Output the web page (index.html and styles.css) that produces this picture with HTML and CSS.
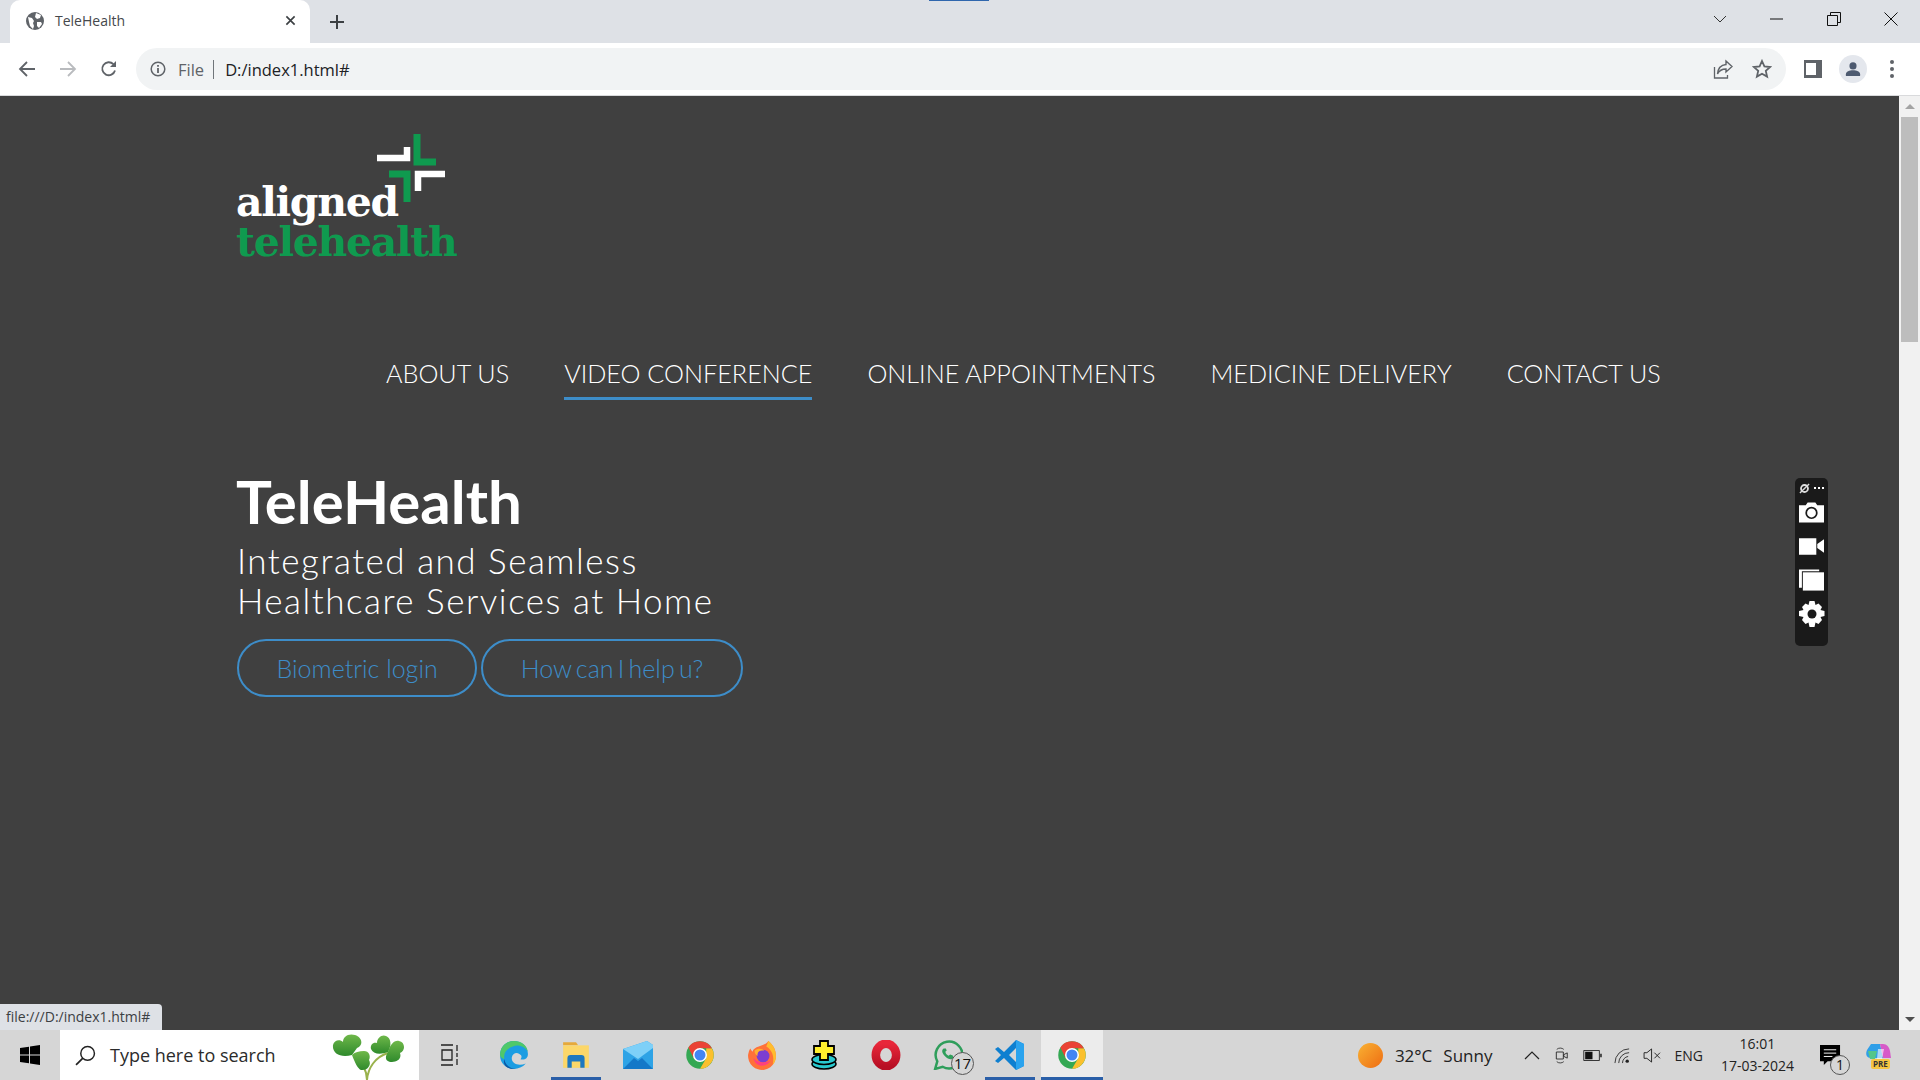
FILE: index.html
```html
<!DOCTYPE html>
<html>

<head>
    <title>TeleHealth</title>
    <link rel="stylesheet" href="styles.css">
</head>

<body>
    <svg class="defs" width="0" height="0">
        <defs>
            <linearGradient id="leaf" x1="0" y1="0" x2="0" y2="1">
                <stop offset="0" stop-color="#6fb84a" />
                <stop offset="1" stop-color="#2f8a2c" />
            </linearGradient>
            <linearGradient id="opera" x1="0" y1="0" x2="0" y2="1">
                <stop offset="0" stop-color="#e8273a" />
                <stop offset="1" stop-color="#b80f24" />
            </linearGradient>
        </defs>
        <symbol id="chrome" viewBox="0 0 24 24">
            <circle cx="12" cy="12" r="11" fill="#34a853" />
            <path d="M21.500 6.500A11 11 0 0 1 12 23l5-8.500V6.500z" fill="#fbc02d" />
            <path d="M12 1a11 11 0 0 1 9.500 5.500H12L7 14.500 2.700 6A11 11 0 0 1 12 1z" fill="#ea4335" />
            <circle cx="12" cy="12" r="5.600" fill="#fff" />
            <circle cx="12" cy="12" r="4.400" fill="#4285f4" />
        </symbol>
    </svg>

    <div class="tabbar">
        <span class="capture-line"></span>
        <div class="tab">
            <svg class="tab-favicon" viewBox="0 0 18 18">
                <circle cx="9" cy="9" r="9" fill="#5f6368" />
                <path d="M2 5l4 1 2 3-1 2 1 3-1 3-3-3-1-4zM10 1l5 2-1 3-3 1-2-2zM11 10h4l1 2-3 4-2-2z" fill="#fff" />
            </svg>
            <span class="tab-title">TeleHealth</span>
            <svg class="tab-close" viewBox="0 0 12 12">
                <path d="M1.500 1.500l9 9M10.500 1.500l-9 9" stroke="#3c4043" stroke-width="1.800" />
            </svg>
        </div>
        <svg class="new-tab" viewBox="0 0 16 16">
            <path d="M8 1v14M1 8h14" stroke="#3c4043" stroke-width="2" />
        </svg>
        <div class="window-buttons">
            <svg class="win-btn win-chevron" viewBox="0 0 14 8">
                <path d="M1 1l6 6 6-6" fill="none" stroke="#333" />
            </svg>
            <svg class="win-btn" viewBox="0 0 14 14">
                <path d="M0 7h13" stroke="#111" />
            </svg>
            <svg class="win-btn" viewBox="0 0 14 14">
                <path d="M.5 3.500h10v10H.5zM3.500 3.500v-3h10v10h-3" fill="none" stroke="#111" />
            </svg>
            <svg class="win-btn" viewBox="0 0 14 14">
                <path d="M.5.5l13 13M13.500.5l-13 13" stroke="#111" />
            </svg>
        </div>
    </div>

    <div class="toolbar">
        <svg class="nav-icon" viewBox="0 0 18 18">
            <path d="M17 9H2M9 2L2 9l7 7" fill="none" stroke="#5f6368" stroke-width="1.800" />
        </svg>
        <svg class="nav-icon" viewBox="0 0 18 18">
            <path d="M1 9h15M9 2l7 7-7 7" fill="none" stroke="#b9bbbe" stroke-width="1.800" />
        </svg>
        <svg class="nav-icon" viewBox="0 0 18 18">
            <path d="M15 10.500A6.500 6.500 0 1 1 13.400 4.200" fill="none" stroke="#5f6368" stroke-width="1.800" />
            <path d="M16 1v6h-6z" fill="#5f6368" />
        </svg>
        <div class="omnibox">
            <svg class="info-icon" viewBox="0 0 16 16">
                <circle cx="8" cy="8" r="6.800" fill="none" stroke="#5f6368" stroke-width="1.500" />
                <path d="M8 7v5M8 4v1.800" stroke="#5f6368" stroke-width="1.800" />
            </svg>
            <span class="omni-scheme">File</span>
            <span class="omni-sep"></span>
            <span class="omni-url">D:/index1.html#</span>
            <svg class="omni-share" viewBox="0 0 20 20">
                <path d="M1.500 8v11h13v-3" fill="none" stroke="#5f6368" stroke-width="1.300" />
                <path d="M13 2l6 5.500-6 5.500V10C9 10 6.500 11 4.500 15c.5-6 3.500-9 8.500-9.500z" fill="none" stroke="#5f6368" stroke-width="1.400" />
            </svg>
            <svg class="omni-star" viewBox="0 0 20 20">
                <path d="M10 2l2.400 5.400 5.800.6-4.400 3.900 1.300 5.700L10 14.700l-5.100 2.900 1.300-5.700L1.800 8l5.800-.6z" fill="none" stroke="#5f6368" stroke-width="1.800" />
            </svg>
        </div>
        <div class="toolbar-right">
            <div class="side-panel"><span></span></div>
            <div class="avatar">
                <svg viewBox="0 0 18 18">
                    <circle cx="9" cy="5.500" r="4" fill="#4d5a70" />
                    <path d="M1 17v-2c0-3 4-4.500 8-4.500s8 1.500 8 4.500v2z" fill="#4d5a70" />
                </svg>
            </div>
            <div class="dots"><i></i><i></i><i></i></div>
        </div>
    </div>

    <div class="viewport">
        <main class="page">
            <a class="logo" href="#">
                <svg class="logo-mark" viewBox="0 0 70 70">
                    <path d="M0 24h30V13" fill="none" stroke="#fff" stroke-width="6.500" />
                    <path d="M40 0v28h19" fill="none" stroke="#0f9a4f" stroke-width="7" />
                    <path d="M12 40h18v28" fill="none" stroke="#0f9a4f" stroke-width="7" />
                    <path d="M68 40H41v17" fill="none" stroke="#fff" stroke-width="6.500" />
                </svg>
                <span class="logo-top">aligned</span>
                <span class="logo-bottom">telehealth</span>
            </a>

            <nav class="menu">
                <a href="#">ABOUT US</a>
                <a href="#" class="active">VIDEO CONFERENCE</a>
                <a href="#">ONLINE APPOINTMENTS</a>
                <a href="#">MEDICINE DELIVERY</a>
                <a href="#">CONTACT US</a>
            </nav>

            <section class="hero">
                <h1>TeleHealth</h1>
                <p>Integrated and Seamless<br>Healthcare Services at Home</p>
                <div class="hero-buttons">
                    <a href="#" class="pill">Biometric login</a>
                    <a href="#" class="pill pill-help">How can I help u?</a>
                </div>
            </section>
        </main>

        <div class="scrollbar">
            <span class="arrow-up"></span>
            <span class="thumb"></span>
            <span class="arrow-down"></span>
        </div>

        <div class="capture-bar">
            <div class="capture-head">
                <svg viewBox="0 0 12 12" width="11" height="11">
                    <circle cx="6" cy="6" r="3.800" fill="none" stroke="#ddd" stroke-width="2" />
                    <path d="M1 11L11 1" stroke="#ddd" stroke-width="1.500" />
                </svg>
                <span class="capture-dots"><i></i><i></i><i></i></span>
            </div>
            <svg class="capture-icon" viewBox="0 0 26 22">
                <path d="M0 4h7l2-3h8l2 3h7v18H0z" fill="#fff" />
                <circle cx="13" cy="12" r="5.500" fill="none" stroke="#1a1a1a" stroke-width="1.800" />
            </svg>
            <svg class="capture-icon" viewBox="0 0 26 22">
                <path d="M0 3h18v17H0zM19 9l7-5v14l-7-5z" fill="#fff" />
            </svg>
            <svg class="capture-icon" viewBox="0 0 26 22">
                <path d="M0 0h21v2H3v17H0z" fill="#fff" />
                <path d="M4 3h22v19H4z" fill="#fff" />
            </svg>
            <svg class="capture-icon" viewBox="0 0 26 26">
                <path d="M10.500 0h5l1 4 3-1.500 3.500 3.500-1.500 3 4 1v5l-4 1 1.500 3L19.500 23l-3-1.500-1 4.500h-5l-1-4.500-3 1.500L3 19l1.500-3-4.500-1v-5l4.500-1L3 6l3.500-3.500 3 1.500z" fill="#fff" />
                <circle cx="13" cy="13" r="4.500" fill="#1a1a1a" />
            </svg>
        </div>

        <div class="status-bubble">file:///D:/index1.html#</div>
    </div>

    <footer class="taskbar">
        <div class="start">
            <svg viewBox="0 0 20 20" width="20" height="20">
                <path d="M0 3l9-1.300V9.500H0zM10 1.500L20 0v9.500H10zM0 10.500h9v7.800L0 17zM10 10.500h10V20l-10-1.500z" fill="#000" />
            </svg>
        </div>
        <div class="search">
            <svg class="search-icon" viewBox="0 0 20 20">
                <circle cx="12" cy="8" r="6.500" fill="none" stroke="#222" stroke-width="1.400" />
                <path d="M7.500 12.500L1 19" stroke="#222" stroke-width="1.600" />
            </svg>
            <span>Type here to search</span>
            <svg class="clover" viewBox="0 0 73 46">
                <path d="M35 46c0-10-4-17-13-24M35 46c1-12 8-23 21-27" fill="none" stroke="#9ab24c" stroke-width="2" />
                <g fill="url(#leaf)">
                    <path d="M20 21C9 24 0 20 1 11c1-5 7-6 10-3C11 3 16-1 23 1c7 2 9 10 2 13z" />
                    <path d="M20 21c3 8 6 14 9 15 6 1 11-5 8-10 2-4 0-9-5-9-5 0-9 1-12 4z" />
                    <path d="M56 18c-8 3-15 2-17-3-1-4 2-7 6-6 0-5 5-9 9-7 5 2 6 9 2 16z" />
                    <path d="M56 18c2-7 6-12 11-11 6 1 7 9 1 12 2 6-3 9-8 9-6 0-8-4-4-10z" />
                </g>
            </svg>
        </div>

        <div class="slot">
            <svg class="task-view" viewBox="0 0 20 22">
                <path d="M1 1h12M1 21h12M2 6h10v10H2zM17 1v6M17 9v4M17 15v6" fill="none" stroke="#222" stroke-width="1.300" />
            </svg>
        </div>
        <div class="apps">
            <div class="slot">
                <svg class="app-icon" viewBox="0 0 28 28">
                    <path d="M14 1C6 1 1 7 1 14c0 9 7 13 13 13 4 0 8-1.500 11-5-7 3-14 0-13-6 .5-3 4-5 7-3 3 1.500 2 4 1 5 4 1 7-1 7-5C27 6 21 1 14 1z" fill="#1b9de2" />
                    <path d="M1 14C1 7 6 1 14 1c7 0 12 4 13 10-3-5-9-7-14-5C7 8 4 12 5 18 3 17 1 16 1 14z" fill="#4fc86a" />
                    <path d="M5 18c1 6 6 9 11 9-8 1-13-4-11-9z" fill="#0c59a4" />
                </svg>
            </div>
            <div class="slot running">
                <svg class="app-icon" viewBox="0 0 28 28">
                    <path d="M2 2h12l2 3H2z" fill="#e6a93a" />
                    <path d="M2 5h24v21H2z" fill="#fcd769" />
                    <path d="M9 14h10a3 3 0 0 1 3 3v9h-4v-6h-8v6H6v-9a3 3 0 0 1 3-3z" fill="#1e78c0" />
                </svg>
            </div>
            <div class="slot">
                <svg class="app-icon" viewBox="0 0 30 28">
                    <path d="M0 8L24 0l6 4v24H0z" fill="#2ea3e6" />
                    <path d="M0 8L24 0l6 4v3L15 18 0 8z" fill="#7ed0f8" />
                    <path d="M0 28l11-11 4 3 4-3 11 11z" fill="#1478c8" />
                </svg>
            </div>
            <div class="slot">
                <svg class="app-icon" viewBox="0 0 24 24"><use href="#chrome" /></svg>
            </div>
            <div class="slot">
                <svg class="app-icon" viewBox="0 0 28 28">
                    <path d="M20 1c5 4 7 9 7 14A13 13 0 1 1 3 8l2 3c1-3 3-4 6-5 3-1 7-2 9-5z" fill="#ff7139" />
                    <path d="M20 1c5 4 7 9 7 14 0 4-1 6-3 8 2-8-1-14-6-17z" fill="#ffbd2e" />
                    <circle cx="15" cy="15" r="6" fill="#7b3ed0" />
                    <path d="M7 10c3-3 8-2 9 0-4-1-7 1-6 5-2-1-3-3-3-5z" fill="#ffb02e" />
                    <path d="M6 17c2 9 13 9 16 2-4 3-11 3-16-2z" fill="#ff3f7f" />
                </svg>
            </div>
            <div class="slot">
                <svg class="app-icon" viewBox="0 0 28 30">
                    <ellipse cx="14" cy="24" rx="12" ry="5" fill="#29c9cf" stroke="#000" stroke-width="1.500" />
                    <ellipse cx="14" cy="19.500" rx="12" ry="5" fill="#29c9cf" stroke="#000" stroke-width="1.500" />
                    <path d="M10 1h8v5h6v8h-6v6h-8v-6H4V6h6z" fill="#ffef2e" stroke="#000" stroke-width="1.800" />
                </svg>
            </div>
            <div class="slot">
                <svg class="app-icon" viewBox="0 0 28 28">
                    <ellipse cx="14" cy="14" rx="9.500" ry="10.500" fill="none" stroke="url(#opera)" stroke-width="8" />
                </svg>
            </div>
            <div class="slot">
                <svg class="app-icon" viewBox="0 0 28 28">
                    <path d="M2 27l2-7A12.500 12.500 0 1 1 9 25z" fill="none" stroke="#2f9e5b" stroke-width="2.300" />
                    <path d="M10 8c-2 1-2 4 1 7s6 4 8 2l-.5-2.500L16 13.500l-1.500 1.200C13 14 12 13 11.500 11l1.300-1.200L12 8z" fill="#2f9e5b" />
                </svg>
                <span class="badge">17</span>
            </div>
            <div class="slot running">
                <svg class="app-icon" viewBox="0 0 30 30">
                    <path d="M21 0l8 4v22l-8 4L9 18l-6 5-3-2 6-6-6-6 3-2 6 5zm0 8l-7 7 7 7z" fill="#0e7fd0" />
                    <path d="M21 0l8 4v22l-8 4z" fill="#2aa3ee" />
                </svg>
            </div>
            <div class="slot slot-active">
                <svg class="app-icon" viewBox="0 0 24 24"><use href="#chrome" /></svg>
            </div>
        </div>

        <div class="tray">
            <span class="sun"></span>
            <span class="weather">32°C</span>
            <span class="weather sunny">Sunny</span>
            <div class="tray-icons">
                <span class="tray-slot">
                    <svg viewBox="0 0 16 10" width="16" height="10">
                        <path d="M1 9l7-7 7 7" fill="none" stroke="#222" stroke-width="1.200" />
                    </svg>
                </span>
                <span class="tray-slot">
                    <svg viewBox="0 0 16 20" width="14" height="19">
                        <path d="M2 3c2-2 6-2 8 0M2 17c2 2 6 2 8 0" fill="none" stroke="#333" />
                        <path d="M1.500 6h8v8h-8zM10 9l4-2v6l-4-2z" fill="none" stroke="#222" />
                    </svg>
                </span>
                <span class="tray-slot">
                    <svg viewBox="0 0 20 12" width="19" height="11">
                        <path d="M.5.500h17v11H.5z" fill="none" stroke="#222" />
                        <path d="M2 2h8v8H2zM18.500 4h1.500v4h-1.500z" fill="#111" />
                    </svg>
                </span>
                <span class="tray-slot">
                    <svg viewBox="0 0 18 18" width="17" height="17">
                        <path d="M1 17A15 15 0 0 1 16 2M5 17A11 11 0 0 1 16 6M9 17a7 7 0 0 1 6-7" fill="none" stroke="#333" />
                        <circle cx="14" cy="15" r="1.800" fill="#222" />
                    </svg>
                </span>
                <span class="tray-slot">
                    <svg viewBox="0 0 20 16" width="19" height="15">
                        <path d="M1 5h3l5-4v14l-5-4H1zM12 5l6 6M18 5l-6 6" fill="none" stroke="#222" />
                    </svg>
                </span>
            </div>
            <span class="lang">ENG</span>
            <div class="clock">
                <span>16:01</span>
                <span>17-03-2024</span>
            </div>
            <div class="notify">
                <svg viewBox="0 0 22 22" width="21" height="21">
                    <path d="M0 0h21v17H8l-4 4v-4H0z" fill="#000" />
                    <path d="M4 5h13M4 8.500h13M4 12h9" stroke="#fff" />
                </svg>
                <span class="badge notify-badge">1</span>
            </div>
            <div class="copilot">
                <svg viewBox="0 0 26 28" width="26" height="28">
                    <path d="M6 3h9l3 14H6C2 17 0 14 2 9z" fill="#2f9fe8" />
                    <path d="M15 3h3c4 0 6 3 7 7l1 7h-8z" fill="#d65ac8" />
                    <path d="M3 10h9l-2 8H5z" fill="#54c68a" />
                    <path d="M13 8h6l-2 10h-5z" fill="#fff" opacity=".6" />
                </svg>
                <span class="pre">PRE</span>
            </div>
        </div>
    </footer>
</body>

</html>
```

FILE: styles.css
```css
* {
    box-sizing: border-box;
}

html,
body {
    height: 100%;
}

body {
    margin: 0;
    display: flex;
    flex-direction: column;
    height: 1080px;
    overflow: hidden;
    font-family: "Open Sans", "Noto Sans", sans-serif;
    background: #404040;
}

svg {
    display: block;
    flex: none;
}

.defs {
    position: absolute;
}

a {
    text-decoration: none;
}

/* browser tab strip */
.tabbar {
    position: relative;
    display: flex;
    align-items: center;
    height: 43px;
    padding-left: 10px;
    background: #dee1e6;
}

.capture-line {
    position: absolute;
    top: 0;
    left: 929px;
    width: 60px;
    height: 1px;
    background: #2f66ad;
}

.tab {
    display: flex;
    align-items: center;
    width: 300px;
    height: 43px;
    padding: 0 14px 2px 16px;
    background: #fff;
    border-radius: 10px 10px 0 0;
}

.tab-favicon {
    width: 18px;
    height: 18px;
}

.tab-title {
    flex: 1;
    margin-left: 11px;
    font-size: 14px;
    color: #45484c;
}

.tab-close {
    width: 11px;
    height: 11px;
}

.new-tab {
    width: 16px;
    height: 16px;
    margin-left: 19px;
}

.window-buttons {
    display: flex;
    align-items: center;
    margin-left: auto;
    padding: 0 22px 6px 0;
    gap: 43px;
}

.win-btn {
    width: 14px;
    height: 14px;
}

.win-chevron {
    height: 8px;
}

/* address bar */
.toolbar {
    display: flex;
    align-items: center;
    height: 53px;
    padding-left: 18px;
    background: #fff;
    border-bottom: 1px solid #d9dadc;
}

.nav-icon {
    width: 18px;
    height: 18px;
    margin-right: 23px;
}

.omnibox {
    display: flex;
    align-items: center;
    width: 1650px;
    height: 42px;
    margin-left: -5px;
    padding: 0 14px 0 14px;
    background: #f1f3f4;
    border-radius: 21px;
}

.info-icon {
    width: 16px;
    height: 16px;
}

.omni-scheme {
    margin-left: 12px;
    font-size: 16.500px;
    color: #5f6368;
}

.omni-sep {
    width: 1px;
    height: 19px;
    margin: 0 11px 0 9px;
    background: #70757a;
}

.omni-url {
    font-size: 16.500px;
    color: #202124;
}

.omni-share {
    width: 20px;
    height: 20px;
    margin-left: auto;
}

.omni-star {
    width: 20px;
    height: 20px;
    margin-left: 19px;
}

.toolbar-right {
    display: flex;
    align-items: center;
    margin-left: 18px;
}

.side-panel {
    width: 18px;
    height: 18px;
    padding: 3px 6px 3px 2px;
    background: #5f6368;
}

.side-panel span {
    display: block;
    width: 10px;
    height: 12px;
    background: #fff;
}

.avatar {
    display: flex;
    align-items: center;
    justify-content: center;
    width: 28px;
    height: 28px;
    margin-left: 17px;
    background: #e4e7ed;
    border-radius: 50%;
}

.avatar svg {
    width: 16px;
    height: 16px;
}

.dots {
    display: flex;
    flex-direction: column;
    gap: 3px;
    margin-left: 23px;
}

.dots i {
    width: 4px;
    height: 4px;
    background: #5f6368;
    border-radius: 50%;
}

/* the page itself */
.viewport {
    position: relative;
    display: flex;
    flex: 1;
    min-height: 0;
}

.page {
    flex: 1;
    padding: 41px 0 0 236px;
    color: #fff;
    font-family: Lato, sans-serif;
}

.logo {
    position: relative;
    display: block;
    width: 222px;
    height: 127px;
    padding-top: 45px;
    font-family: "DejaVu Serif", serif;
}

.logo-mark {
    position: absolute;
    top: -3px;
    left: 141px;
    width: 70px;
    height: 70px;
}

.logo-top,
.logo-bottom {
    display: block;
    font-size: 41px;
    font-weight: 700;
    line-height: 40px;
    letter-spacing: -1.300px;
    color: #fff;
}

.logo-bottom {
    color: #0f9a4f;
}

.menu {
    display: flex;
    gap: 55px;
    margin: 94px 0 0 150px;
}

.menu a {
    padding-bottom: 9px;
    font-size: 25.200px;
    font-weight: 300;
    color: #fff;
    border-bottom: 3px solid transparent;
}

.menu a.active {
    border-bottom-color: #3d8dc9;
}

.hero {
    margin-top: 70px;
}

.hero h1 {
    margin: 0;
    font-size: 60px;
    font-weight: 700;
    line-height: 62px;
}

.hero p {
    margin: 8px 0 0 1px;
    font-size: 35px;
    font-weight: 300;
    line-height: 40px;
    letter-spacing: 1.500px;
}

.hero-buttons {
    display: flex;
    gap: 4px;
    margin: 19px 0 0 1px;
}

.pill {
    padding: 0 37.500px;
    height: 58px;
    line-height: 54px;
    font-size: 25px;
    font-weight: 300;
    color: #3d8dc9;
    border: 2px solid #3d8dc9;
    border-radius: 29px;
}

.pill-help {
    word-spacing: -2.500px;
}

.scrollbar {
    display: flex;
    flex-direction: column;
    align-items: center;
    width: 21px;
    background: #f1f1f1;
}

.arrow-up,
.arrow-down {
    width: 0;
    height: 0;
    margin: 8px 0 5px;
    border-left: 5px solid transparent;
    border-right: 5px solid transparent;
}

.arrow-up {
    border-bottom: 5px solid #a3a3a3;
}

.arrow-down {
    margin: auto 0 8px;
    border-top: 5px solid #505050;
}

.thumb {
    width: 17px;
    height: 225px;
    margin-top: 3px;
    background: #bdbdbd;
}

.capture-bar {
    position: absolute;
    top: 382px;
    left: 1795px;
    display: flex;
    flex-direction: column;
    align-items: center;
    width: 33px;
    height: 168px;
    padding-top: 4px;
    background: #1a1a1a;
    border-radius: 5px;
}

.capture-head {
    display: flex;
    align-items: center;
    gap: 4px;
    height: 12px;
    margin-bottom: 6px;
}

.capture-dots {
    display: flex;
    gap: 2px;
}

.capture-dots i {
    width: 2px;
    height: 2px;
    background: #fff;
}

.capture-icon {
    width: 25px;
    height: 24px;
    margin-bottom: 10px;
}

.capture-icon:last-child {
    width: 26px;
    height: 26px;
    margin-top: -1px;
}

.status-bubble {
    position: absolute;
    left: 0;
    bottom: 0;
    width: 162px;
    height: 26px;
    padding-left: 6px;
    font-size: 14px;
    line-height: 26px;
    color: #3c4043;
    background: #dee1e6;
    border-top-right-radius: 4px;
}

/* windows taskbar */
.taskbar {
    display: flex;
    align-items: stretch;
    height: 50px;
    background: #d6d6d6;
}

.start {
    display: flex;
    align-items: center;
    justify-content: center;
    width: 60px;
}

.search {
    position: relative;
    display: flex;
    align-items: center;
    width: 359px;
    padding-left: 15px;
    font-size: 18px;
    color: #2b2b2b;
    background: #fff;
}

.search-icon {
    width: 21px;
    height: 21px;
    margin-right: 14px;
}

.clover {
    position: absolute;
    top: 4px;
    right: 14px;
    width: 73px;
    height: 46px;
}

.slot {
    position: relative;
    display: flex;
    align-items: center;
    justify-content: center;
    width: 62px;
}

.apps {
    display: flex;
    margin-left: 2px;
}

.task-view {
    width: 20px;
    height: 22px;
}

.app-icon {
    width: 30px;
    height: 30px;
}

.running::after,
.slot-active::after {
    content: "";
    position: absolute;
    left: 6px;
    right: 6px;
    bottom: 0;
    height: 3px;
    background: #2a5fa8;
}

.slot-active {
    background: #ececec;
}

.slot-active::after {
    left: 0;
    right: 0;
}

.badge {
    position: absolute;
    top: 22px;
    left: 34px;
    width: 23px;
    height: 23px;
    font-size: 15px;
    line-height: 21px;
    text-align: center;
    color: #111;
    background: #d6d6d6;
    border: 1px solid #555;
    border-radius: 50%;
}

.tray {
    display: flex;
    align-items: center;
    margin-left: auto;
    font-size: 16px;
    color: #222;
}

.sun {
    width: 25px;
    height: 25px;
    background: linear-gradient(135deg, #f9b233, #ee6c12);
    border-radius: 50%;
}

.weather {
    margin-left: 12px;
    font-size: 17px;
}

.sunny {
    margin-left: 11px;
}

.tray-icons {
    display: flex;
    margin-left: 25px;
}

.tray-slot {
    display: flex;
    align-items: center;
    justify-content: center;
    width: 30px;
}

.lang {
    margin-left: 7px;
    font-size: 14px;
}

.clock {
    display: flex;
    flex-direction: column;
    align-items: center;
    gap: 2px;
    margin-left: 18px;
    font-size: 14px;
    line-height: 20px;
}

.notify {
    position: relative;
    margin-left: 26px;
}

.notify-badge {
    top: 10px;
    left: 10px;
    width: 20px;
    height: 20px;
    font-size: 14px;
    line-height: 18px;
}

.copilot {
    position: relative;
    margin: 0 29px 0 24px;
}

.pre {
    position: absolute;
    left: 6px;
    bottom: 0;
    padding: 0 2px;
    font-size: 8px;
    font-weight: 700;
    line-height: 10px;
    color: #333;
    background: #f5c542;
    border-radius: 2px;
}
```
